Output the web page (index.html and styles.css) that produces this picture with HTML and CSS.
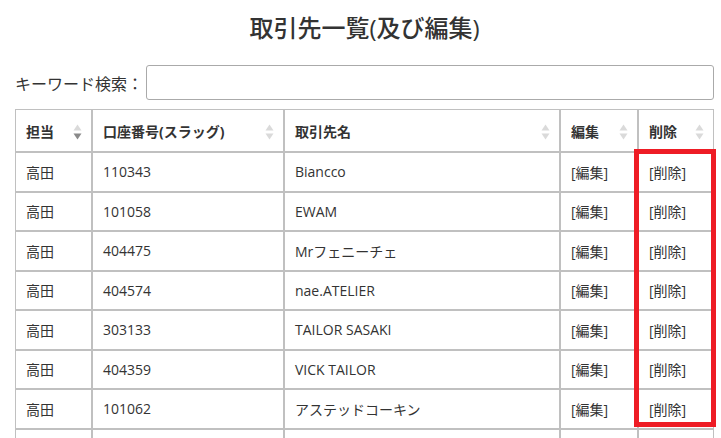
FILE: index.html
```html
<!DOCTYPE html>
<html lang="ja">
<head>
<meta charset="utf-8">
<title>取引先一覧(及び編集)</title>
<link rel="stylesheet" href="styles.css">
</head>
<body>
<div class="page">
  <h1 class="title">取引先一覧(及び編集)</h1>
  <div class="search">
    <label class="search-label" for="kw">キーワード検索：</label>
    <input id="kw" class="search-input" type="text">
  </div>
  <div class="table-wrap">
    <table class="list">
      <colgroup>
        <col class="c1"><col class="c2"><col class="c3"><col class="c4"><col class="c5">
      </colgroup>
      <thead>
        <tr>
          <th><span>担当</span><svg class="sort" viewBox="0 0 9 18" width="9" height="18"><path class="up" d="M4.5 1.5 L8.5 7.5 L0.5 7.5 Z"/><path class="down desc" d="M0.5 10.5 L8.5 10.5 L4.5 16.5 Z"/></svg></th>
          <th><span>口座番号(スラッグ)</span><svg class="sort" viewBox="0 0 9 18" width="9" height="18"><path class="up" d="M4.5 1.5 L8.5 7.5 L0.5 7.5 Z"/><path class="down" d="M0.5 10.5 L8.5 10.5 L4.5 16.5 Z"/></svg></th>
          <th><span>取引先名</span><svg class="sort" viewBox="0 0 9 18" width="9" height="18"><path class="up" d="M4.5 1.5 L8.5 7.5 L0.5 7.5 Z"/><path class="down" d="M0.5 10.5 L8.5 10.5 L4.5 16.5 Z"/></svg></th>
          <th><span>編集</span><svg class="sort" viewBox="0 0 9 18" width="9" height="18"><path class="up" d="M4.5 1.5 L8.5 7.5 L0.5 7.5 Z"/><path class="down" d="M0.5 10.5 L8.5 10.5 L4.5 16.5 Z"/></svg></th>
          <th><span>削除</span><svg class="sort" viewBox="0 0 9 18" width="9" height="18"><path class="up" d="M4.5 1.5 L8.5 7.5 L0.5 7.5 Z"/><path class="down" d="M0.5 10.5 L8.5 10.5 L4.5 16.5 Z"/></svg></th>
        </tr>
      </thead>
      <tbody>
        <tr><td>高田</td><td>110343</td><td>Biancco</td><td>[編集]</td><td>[削除]</td></tr>
        <tr><td>高田</td><td>101058</td><td>EWAM</td><td>[編集]</td><td>[削除]</td></tr>
        <tr><td>高田</td><td>404475</td><td>Mrフェニーチェ</td><td>[編集]</td><td>[削除]</td></tr>
        <tr><td>高田</td><td>404574</td><td>nae.ATELIER</td><td>[編集]</td><td>[削除]</td></tr>
        <tr><td>高田</td><td>303133</td><td>TAILOR SASAKI</td><td>[編集]</td><td>[削除]</td></tr>
        <tr><td>高田</td><td>404359</td><td>VICK TAILOR</td><td>[編集]</td><td>[削除]</td></tr>
        <tr><td>高田</td><td>101062</td><td>アステッドコーキン</td><td>[編集]</td><td>[削除]</td></tr>
        <tr><td></td><td></td><td></td><td></td><td></td></tr>
      </tbody>
    </table>
    <div class="highlight"></div>
  </div>
</div>
</body>
</html>
```

FILE: styles.css
```css
* { box-sizing: border-box; }
html, body { margin: 0; padding: 0; background: #fff; }
body {
  font-family: "Open Sans", "Noto Sans CJK JP", sans-serif;
  color: #333;
  overflow: hidden;
}
.page {
  padding: 11px 0 0 15px;
  width: 714px;
}
.title {
  margin: 0;
  font-size: 24px;
  font-weight: 500;
  line-height: 34px;
  text-align: center;
  color: #333;
}
.search {
  display: flex;
  align-items: center;
  margin-top: 20px;
  height: 35px;
}
.search-label {
  font-size: 16px;
  white-space: nowrap;
  margin-right: 3px;
  color: #333;
}
.search-input {
  flex: 1;
  height: 35px;
  border: 1px solid #aaa;
  border-radius: 3px;
  background: #fff;
  padding: 0 8px;
  font-size: 14px;
}
.table-wrap {
  position: relative;
  margin-top: 9px;
  width: 699px;
}
.list {
  width: 699px;
  table-layout: fixed;
  border-collapse: separate;
  border-spacing: 0;
  font-size: 14px;
}
.c1 { width: 77px; }
.c2 { width: 192px; }
.c3 { width: 276px; }
.c4 { width: 78px; }
.c5 { width: 76px; }
.list th, .list td {
  border: 1px solid #c0c0c0;
  padding: 0 10px;
  text-align: left;
  vertical-align: middle;
  white-space: nowrap;
  overflow: hidden;
}
.list thead tr { height: 43px; }
.list tbody tr { height: 39.5px; }
.list th {
  font-weight: 700;
  position: relative;
  padding-right: 22px;
}
.list td { font-weight: 400; color: #333; }
.sort {
  position: absolute;
  right: 9px;
  top: 50%;
  margin-top: -8px;
}
.sort path { fill: #dadada; }
.sort path.desc { fill: #8a8a8a; }
.highlight {
  position: absolute;
  left: 619px;
  top: 40px;
  width: 82px;
  height: 278px;
  border: 5px solid #ee1c25;
  pointer-events: none;
}
```
